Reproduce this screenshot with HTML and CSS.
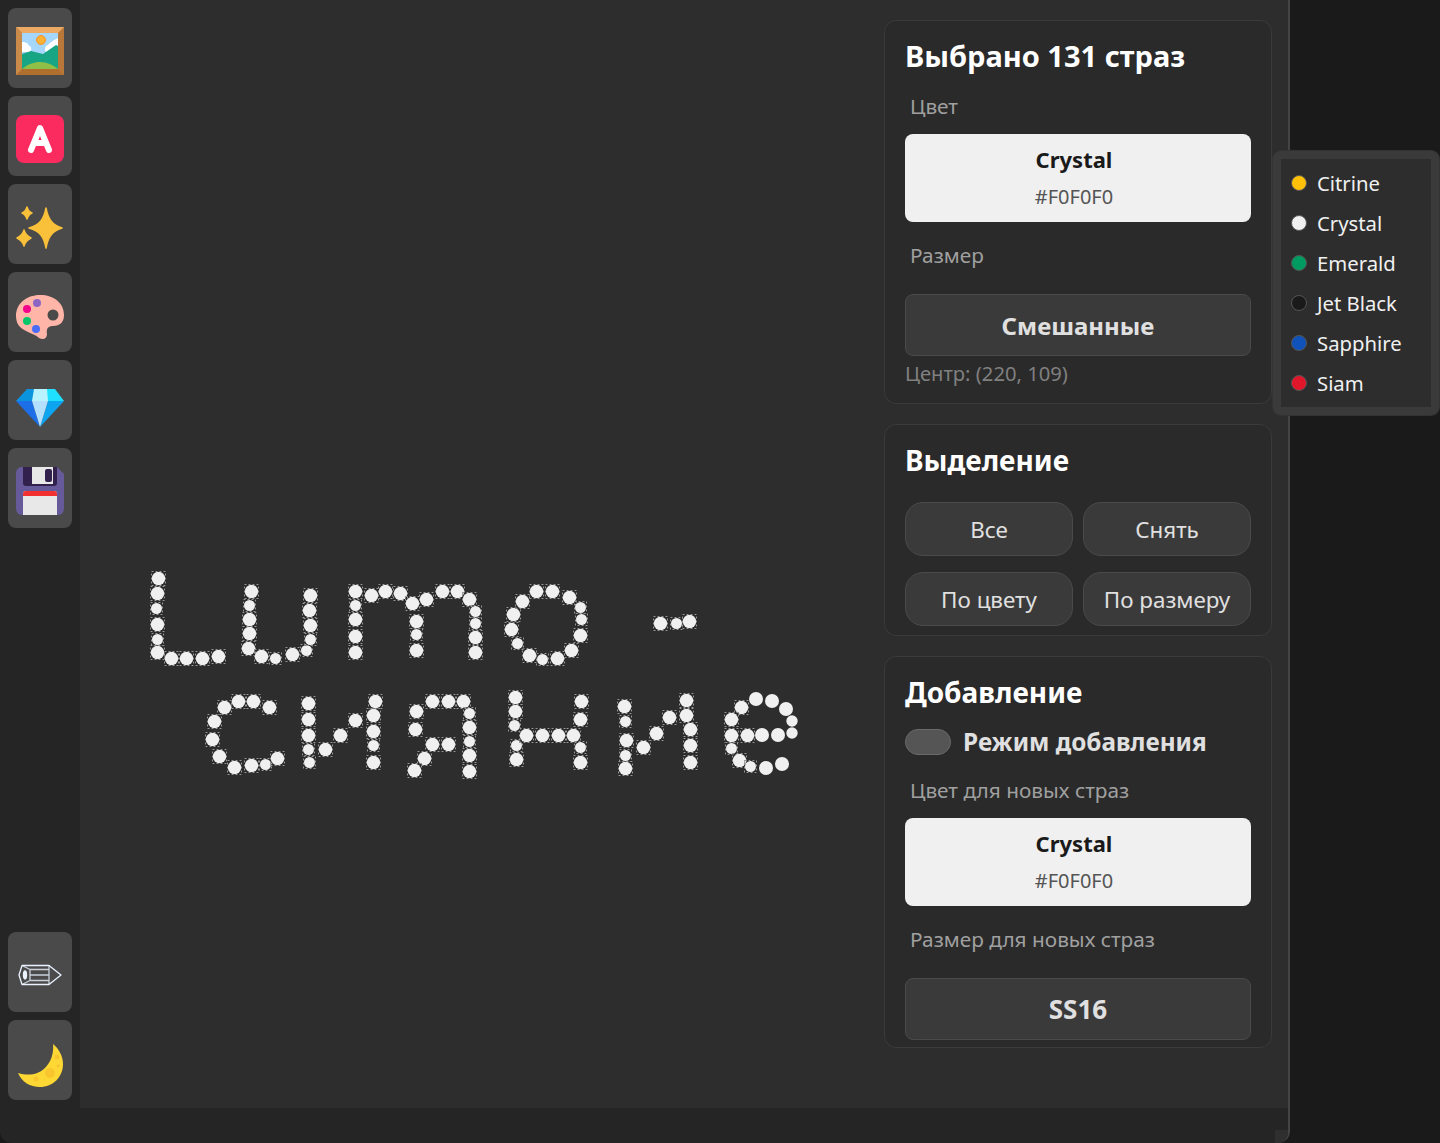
FILE: index.html
```html
<!DOCTYPE html>
<html lang="ru">
<head>
<meta charset="utf-8">
<title>Lumo</title>
<link rel="stylesheet" href="styles.css">
</head>
<body>
<div class="window">
  <div class="body-row">
    <aside class="sidebar">
      <div class="tool-group">
        <button class="tool"><svg class="ico" viewBox="0 0 48 48"><rect width="48" height="48" fill="#b9783a"/><path d="M0 0h48l-6 6H6z" fill="#eba964"/><path d="M0 48h48l-6-6H6z" fill="#b06f2c"/><path d="M0 0v48l6-6V6z" fill="#c98a4a"/><rect x="6" y="6" width="36" height="36" fill="#a5d6fb"/><path d="M6 15c4 0 6 1 7 4 3 0 3 5 0 6H6zM42 11v14H30c-2-3-1-6 2-7 2-3 6-5 10-7z" fill="#fff"/><path d="M6 27l9-3 12 3 13-9 2 1v23H6z" fill="#17a583"/><path d="M6 42c6-5 12-7 18-7 7 0 13 3 18 7z" fill="#8fbf46"/><circle cx="25" cy="13" r="4.500" fill="#f9b233" stroke="#f5912c"/></svg></button>
        <button class="tool"><svg class="ico" viewBox="0 0 48 48"><rect width="48" height="48" rx="8" fill="#fb2b60"/><path d="M15 35l9-22 9 22M18.500 28h11" fill="none" stroke="#fff" stroke-width="6" stroke-linecap="round" stroke-linejoin="round"/></svg></button>
        <button class="tool"><svg class="ico" viewBox="0 0 48 48"><g fill="#f9c03a" stroke="#f9c03a" stroke-width="1.500" stroke-linejoin="round"><path d="M30 5C32 16 36 22 46 25 36 28 32 34 30 45 28 34 24 28 13 25 24 22 28 16 30 5z"/><path d="M11 4c1 3 2 5 5 6-3 1-4 3-5 6-1-3-2-5-5-6 3-1 4-3 5-6z"/><path d="M8 27c1 4 3 6 7 8-4 2-6 4-7 8-1-4-3-6-7-8 4-2 6-4 7-8z"/></g></svg></button>
        <button class="tool"><svg class="ico" viewBox="0 0 48 48"><path d="M24 4C10 4 0 13 0 25c0 8 4 12 10 15 6 3 10 4 13 7 4 2 8 1 8-4-1-5 1-8 6-8 7 0 11-4 11-11C48 12 38 4 24 4z" fill="#ffb6a8"/><circle cx="37" cy="24" r="5.500" fill="#4a4a4a"/><circle cx="21" cy="12" r="4" fill="#8d66c4"/><circle cx="11" cy="18" r="4" fill="#f2058a"/><circle cx="11" cy="30" r="4" fill="#05c76a"/><circle cx="20" cy="38" r="4" fill="#4a6cf7"/></svg></button>
        <button class="tool"><svg class="ico" viewBox="0 0 48 48"><path d="M11 10h13v12H0z" fill="#0b94dc"/><path d="M24 10h15l9 12H24z" fill="#1fe0ff"/><path d="M0 22h16l8 26z" fill="#1c6fe6"/><path d="M48 22H32l-8 26z" fill="#0ea5f0"/><path d="M16 22h16l-8 26z" fill="#b4e0ff"/><path d="M18 10h13l1 12H16z" fill="#b8f3ff"/></svg></button>
        <button class="tool"><svg class="ico" viewBox="0 0 48 48"><path d="M6 0h35l7 7v35a6 6 0 0 1-6 6H6a6 6 0 0 1-6-6V6a6 6 0 0 1 6-6z" fill="#675a9b"/><path d="M7 0h34v16a3 3 0 0 1-3 3H10a3 3 0 0 1-3-3z" fill="#33214d"/><rect x="16" y="0" width="21" height="17" fill="#e8e8e8"/><rect x="29" y="2" width="7" height="13" rx="2" fill="#33214d"/><path d="M7 27a3 3 0 0 1 3-3h28a3 3 0 0 1 3 3v21H7z" fill="#e8e8e8"/><path d="M7 29v-2a3 3 0 0 1 3-3h28a3 3 0 0 1 3 3v2z" fill="#f23030"/></svg></button>
      </div>
      <div class="tool-group">
        <button class="tool"><svg class="ico" viewBox="0 0 48 48"><g fill="none" stroke="#eaf2ff" stroke-width="1.300" stroke-linejoin="round"><path d="M3 24l3-9.500h27L45 24l-12 9.500H6z"/><path d="M6 14.500l8 4H33M6 33.500l8-4H33M14 18.500v11M33 14.500v19M14 24h19" stroke-opacity=".8"/><ellipse cx="9" cy="24" rx="1.500" ry="4" fill="#eaf2ff"/></g></svg></button>
        <button class="tool"><svg class="ico" viewBox="0 0 48 48"><path d="M37 5c6 5 10 12 10 20 0 13-10 23-23 23C14 48 6 43 2 34c10 3 20 2 27-5 6-6 9-15 8-24z" fill="#fdd835"/><circle cx="34" cy="34" r="5" fill="#f9c52f"/><circle cx="41" cy="18" r="2.500" fill="#f5c430"/><circle cx="42" cy="27" r="1.500" fill="#f5c430"/><circle cx="20" cy="40" r="2.500" fill="#f9c52f"/></svg></button>
      </div>
    </aside>
    <main class="workspace">
      <div class="canvas">
        <svg class="stones" width="805" height="1108" viewBox="0 0 805 1108" aria-hidden="true">
          <defs>
            <g id="b"><circle cx=".5" cy=".5" r="6.700" fill="#f0f0f0"/><rect x="-6.500" y="-6.500" width="14" height="14" fill="none" stroke="#111" stroke-opacity=".35"/><rect x="-6.500" y="-6.500" width="14" height="14" fill="none" stroke="#999" stroke-dasharray="2 2"/></g>
            <g id="s"><circle cx=".5" cy=".5" r="5.500" fill="#f0f0f0"/><rect x="-5.500" y="-5.500" width="12" height="12" fill="none" stroke="#111" stroke-opacity=".35"/><rect x="-5.500" y="-5.500" width="12" height="12" fill="none" stroke="#999" stroke-dasharray="2 2"/></g>
            <circle id="r" r="7" fill="#f0f0f0"/>
            <circle id="t" r="5.700" fill="#f0f0f0"/>
          </defs>
          <g transform="translate(-80 0)">
            <use href="#b" x="158" y="578"/><use href="#b" x="157" y="593"/><use href="#s" x="156" y="608"/><use href="#b" x="157" y="624"/><use href="#s" x="157" y="639"/><use href="#b" x="157" y="652"/><use href="#b" x="171" y="658"/><use href="#b" x="186" y="658"/><use href="#b" x="202" y="658"/><use href="#b" x="218" y="656"/>
            <use href="#b" x="251" y="591"/><use href="#s" x="249" y="605"/><use href="#b" x="249" y="619"/><use href="#b" x="249" y="633"/><use href="#b" x="248" y="648"/><use href="#b" x="261" y="656"/><use href="#s" x="275" y="658"/><use href="#b" x="292" y="654"/><use href="#s" x="306" y="650"/><use href="#b" x="310" y="595"/><use href="#b" x="309" y="610"/><use href="#b" x="310" y="625"/><use href="#s" x="310" y="639"/>
            <use href="#b" x="355" y="591"/><use href="#s" x="355" y="605"/><use href="#b" x="355" y="619"/><use href="#b" x="355" y="636"/><use href="#b" x="355" y="652"/><use href="#b" x="371" y="595"/><use href="#b" x="385" y="591"/><use href="#b" x="400" y="593"/><use href="#b" x="412" y="603"/><use href="#b" x="426" y="599"/><use href="#b" x="442" y="591"/><use href="#b" x="457" y="591"/><use href="#b" x="469" y="599"/><use href="#s" x="475" y="611"/><use href="#s" x="475" y="623"/><use href="#b" x="475" y="637"/><use href="#b" x="475" y="652"/><use href="#b" x="416" y="621"/><use href="#s" x="416" y="634"/><use href="#b" x="416" y="650"/>
            <use href="#b" x="536" y="591"/><use href="#b" x="552" y="591"/><use href="#b" x="569" y="597"/><use href="#s" x="580" y="607"/><use href="#s" x="581" y="619"/><use href="#b" x="580" y="635"/><use href="#b" x="571" y="650"/><use href="#b" x="557" y="658"/><use href="#s" x="542" y="659"/><use href="#b" x="529" y="655"/><use href="#s" x="517" y="643"/><use href="#b" x="511" y="629"/><use href="#b" x="513" y="614"/><use href="#b" x="522" y="601"/>
            <use href="#b" x="660" y="623"/><use href="#s" x="676" y="623"/><use href="#b" x="689" y="621"/>
            <use href="#b" x="238" y="701"/><use href="#b" x="253" y="701"/><use href="#b" x="269" y="707"/><use href="#b" x="224" y="707"/><use href="#b" x="214" y="721"/><use href="#b" x="212" y="739"/><use href="#b" x="219" y="756"/><use href="#b" x="234" y="767"/><use href="#b" x="251" y="765"/><use href="#s" x="265" y="764"/><use href="#b" x="277" y="758"/>
            <use href="#b" x="308" y="703"/><use href="#b" x="308" y="719"/><use href="#b" x="308" y="735"/><use href="#s" x="308" y="749"/><use href="#s" x="309" y="762"/><use href="#b" x="325" y="749"/><use href="#b" x="340" y="735"/><use href="#b" x="355" y="720"/><use href="#b" x="375" y="701"/><use href="#b" x="373" y="715"/><use href="#b" x="373" y="731"/><use href="#s" x="373" y="745"/><use href="#b" x="373" y="762"/>
            <use href="#b" x="432" y="701"/><use href="#b" x="448" y="701"/><use href="#b" x="463" y="701"/><use href="#b" x="416" y="711"/><use href="#b" x="415" y="729"/><use href="#b" x="432" y="744"/><use href="#b" x="448" y="744"/><use href="#b" x="424" y="758"/><use href="#b" x="414" y="770"/><use href="#s" x="469" y="713"/><use href="#b" x="469" y="727"/><use href="#s" x="469" y="741"/><use href="#b" x="469" y="755"/><use href="#b" x="469" y="771"/>
            <use href="#b" x="515" y="697"/><use href="#b" x="515" y="711"/><use href="#s" x="514" y="725"/><use href="#s" x="516" y="745"/><use href="#b" x="516" y="759"/><use href="#b" x="526" y="735"/><use href="#b" x="542" y="735"/><use href="#b" x="558" y="735"/><use href="#b" x="573" y="735"/><use href="#b" x="581" y="701"/><use href="#b" x="580" y="719"/><use href="#s" x="580" y="747"/><use href="#b" x="580" y="762"/>
            <use href="#b" x="624" y="706"/><use href="#s" x="625" y="721"/><use href="#b" x="626" y="740"/><use href="#s" x="625" y="755"/><use href="#b" x="625" y="768"/><use href="#b" x="643" y="747"/><use href="#b" x="656" y="733"/><use href="#b" x="669" y="717"/><use href="#b" x="686" y="700"/><use href="#b" x="686" y="715"/><use href="#b" x="690" y="729"/><use href="#b" x="690" y="745"/><use href="#b" x="690" y="762"/>
            <use href="#b" x="741" y="707"/><use href="#b" x="731" y="719"/><use href="#b" x="731" y="735"/><use href="#b" x="747" y="735"/><use href="#s" x="731" y="748"/><use href="#b" x="739" y="760"/><use href="#s" x="750" y="766"/>
            <use href="#r" x="756" y="699"/><use href="#r" x="772" y="701"/><use href="#r" x="786" y="709"/><use href="#t" x="792" y="721"/><use href="#t" x="792" y="733"/><use href="#r" x="762" y="735"/><use href="#r" x="778" y="735"/><use href="#r" x="766" y="768"/><use href="#r" x="782" y="764"/>
          </g>
        </svg>
        <div class="panels">
          <section class="card first">
            <h2>Выбрано 131 страз</h2>
            <div class="label lead">Цвет</div>
            <button class="swatch"><span class="sw-name">Crystal</span><span class="sw-hex">#F0F0F0</span></button>
            <div class="label size">Размер</div>
            <button class="select">Смешанные</button>
            <div class="center">Центр: (220, 109)</div>
          </section>
          <section class="card second">
            <h2>Выделение</h2>
            <div class="pill-grid">
              <button class="pill">Все</button>
              <button class="pill">Снять</button>
              <button class="pill">По цвету</button>
              <button class="pill">По размеру</button>
            </div>
          </section>
          <section class="card third">
            <h2>Добавление</h2>
            <div class="toggle-row"><span class="toggle"></span><span class="toggle-text">Режим добавления</span></div>
            <div class="label new">Цвет для новых страз</div>
            <button class="swatch"><span class="sw-name">Crystal</span><span class="sw-hex">#F0F0F0</span></button>
            <div class="label size">Размер для новых страз</div>
            <button class="select latin">SS16</button>
          </section>
        </div>
      </div>
      <div class="statusbar"><span class="grip"></span></div>
    </main>
  </div>
</div>
<ul class="palette">
  <li><span class="dot citrine"></span>Citrine</li>
  <li><span class="dot crystal"></span>Crystal</li>
  <li><span class="dot emerald"></span>Emerald</li>
  <li><span class="dot jet"></span>Jet Black</li>
  <li><span class="dot sapphire"></span>Sapphire</li>
  <li><span class="dot siam"></span>Siam</li>
</ul>
</body>
</html>
```
FILE: styles.css
```css
* { box-sizing: border-box; }
html, body { margin: 0; height: 100%; }
body { background: #1a1a1a; font-family: "Noto Sans", "Open Sans", sans-serif; overflow: hidden; position: relative; color: #e0e0e0; }
button { font-family: inherit; cursor: pointer; }
.window { width: 1290px; height: 1143px; border-right: 2px solid #444; border-radius: 0 0 12px 12px; overflow: hidden; background: #252525; }
.body-row { display: flex; height: 100%; }
.sidebar { width: 80px; height: 100%; padding: 8px 8px 43px; display: flex; flex-direction: column; justify-content: space-between; background: #252525; }
.tool-group { display: flex; flex-direction: column; gap: 8px; }
.tool { width: 64px; height: 80px; padding: 0; border: 0; border-radius: 8px; background: #4a4a4a; display: flex; align-items: center; justify-content: center; }
.ico { width: 48px; height: 48px; display: block; margin-top: 6px; }
.workspace { flex: 1; display: flex; flex-direction: column; min-width: 0; }
.canvas { flex: 1; position: relative; display: flex; justify-content: flex-end; background: #2d2d2d; min-height: 0; }
.stones { position: absolute; left: 0; top: 0; }
.statusbar { height: 35px; background: #252525; position: relative; flex: none; }
.grip { position: absolute; right: 0; bottom: 0; width: 13px; height: 13px; background: #2f2f2f; }
.panels { position: relative; width: 404px; padding: 20px 16px 0 0; display: flex; flex-direction: column; gap: 20px; flex: none; }
.card { background: #2a2a2a; border: 1px solid #3a3a3a; border-radius: 12px; padding: 20px 20px 0; }
.first { height: 384px; }
.second { height: 212px; }
.third { height: 392px; }
h2 { margin: 0; font-size: 28px; line-height: 32px; font-weight: 700; color: #fff; }
.first h2 { margin-top: -1px; font-size: 29px; }
.second h2 { margin-top: -1px; }
.third h2 { margin-top: -1px; }
.label { margin: 20px 0 0 5px; font-size: 20.800px; line-height: 27px; color: #a0a0a0; }
.label.lead { margin-top: 21px; }
.label.size { margin-top: 20px; }
.label.new { margin-top: 19px; }
.swatch { margin-top: 14px; width: 346px; height: 88px; display: flex; flex-direction: column; align-items: center; border: 0; border-radius: 8px; background: #f0f0f0; padding: 10px 8px 0 0; }
.sw-name { font-size: 22px; line-height: 30px; font-weight: 700; color: #1a1a1a; }
.sw-hex { margin-top: 10px; font-size: 20px; line-height: 26px; color: #555; }
.select { display: block; margin-top: 25px; width: 346px; height: 62px; border: 1px solid #4a4a4a; border-radius: 8px; background: #3a3a3a; color: #e0e0e0; font-size: 24px; font-weight: 700; padding: 0; }
.select.latin { font-size: 26px; }
.center { margin-top: 3px; font-size: 20.200px; line-height: 28px; color: #808080; }
.pill-grid { margin-top: 26px; display: grid; grid-template-columns: 168px 168px; gap: 16px 10px; }
.pill { height: 54px; border: 1px solid #4a4a4a; border-radius: 18px; background: #3a3a3a; color: #e0e0e0; font-size: 22.400px; padding: 0; }
.toggle-row { margin-top: 18px; display: flex; align-items: center; gap: 12px; height: 32px; }
.toggle { width: 46px; height: 26px; border-radius: 13px; background: #555; border: 1px solid #6a6a6a; }
.toggle-text { font-size: 24.300px; line-height: 32px; font-weight: 700; color: #e0e0e0; }
.palette { position: absolute; left: 1273px; top: 151px; width: 166px; height: 264px; margin: 0; list-style: none; background: #2d2d2d; border: 8px solid #3a3a3a; border-radius: 8px; box-shadow: 0 0 0 1px #333; display: flex; flex-direction: column; padding: 4px 0 0 10px; font-size: 20.300px; color: #f0f0f0; }
.palette li { height: 40px; display: flex; align-items: center; gap: 10px; white-space: nowrap; line-height: 40px; }
.dot { width: 16px; height: 16px; border-radius: 50%; border: 1px solid #555; flex: none; margin-top: -1px; }
.citrine { background: #ffc107; }
.crystal { background: #f0f0f0; }
.emerald { background: #009b60; }
.jet { background: #1a1a1a; }
.sapphire { background: #0f52ba; }
.siam { background: #e0162b; }
```
